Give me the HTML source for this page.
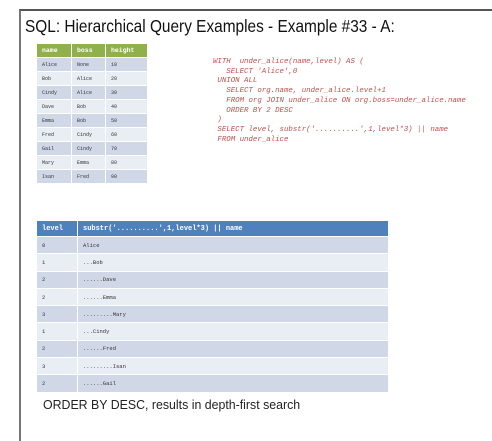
<!DOCTYPE html>
<html><head><style>
body{margin:0;width:492px;height:429px;background:#fff;position:relative;overflow:hidden;font-family:"Liberation Sans",sans-serif}
.frame{position:absolute;left:19px;top:9px;width:480px;height:430px;border-top:2px solid #555;border-left:2px solid #777}
.title{position:absolute;left:25px;top:16px;font-size:17.5px;color:#111;transform:scaleX(0.88);transform-origin:0 0;white-space:nowrap}
table{position:absolute;border-collapse:separate;border-spacing:1px;font-family:"Liberation Mono",monospace}
td,th{padding:0 0 0 5px;text-align:left}
.t1{left:36px;top:43px;font-size:5px}
.t1 th{background:#8fb04a;color:#fff;height:13px;font-size:6.5px}
.t1 td{height:13px;color:#333}
.t2{left:36px;top:220px;font-size:5.5px}
.t2 th{background:#4f81bd;color:#fff;height:15px;font-size:7px}
.t2 td{height:16.3px;color:#333}
tr.a td{background:#d0d8e8}
tr.b td{background:#e9edf4}
.code{position:absolute;left:213px;top:58px;font-family:"Liberation Mono",monospace;font-style:italic;font-size:7.4px;line-height:9.7px;color:#c0504d;white-space:pre}
.cap{position:absolute;left:43px;top:397px;font-size:13px;color:#222;transform:scaleX(0.95);transform-origin:0 0;white-space:nowrap}
</style></head><body>
<div class="frame"></div>
<div class="title">SQL: Hierarchical Query Examples - Example #33 - A:</div>
<table class="t1">
<tr><th style="width:29px">name</th><th style="width:28px">boss</th><th style="width:36px">height</th></tr>
<tr class="a"><td>Alice</td><td>None</td><td>10</td></tr>
<tr class="b"><td>Bob</td><td>Alice</td><td>20</td></tr>
<tr class="a"><td>Cindy</td><td>Alice</td><td>30</td></tr>
<tr class="b"><td>Dave</td><td>Bob</td><td>40</td></tr>
<tr class="a"><td>Emma</td><td>Bob</td><td>50</td></tr>
<tr class="b"><td>Fred</td><td>Cindy</td><td>60</td></tr>
<tr class="a"><td>Gail</td><td>Cindy</td><td>70</td></tr>
<tr class="b"><td>Mary</td><td>Emma</td><td>80</td></tr>
<tr class="a"><td>Isan</td><td>Fred</td><td>90</td></tr>
</table>
<div class="code">WITH  under_alice(name,level) AS (
   SELECT 'Alice',0
 UNION ALL
   SELECT org.name, under_alice.level+1
   FROM org JOIN under_alice ON org.boss=under_alice.name
   ORDER BY 2 DESC
 )
 SELECT level, substr('..........',1,level*3) || name
 FROM under_alice</div>
<table class="t2">
<tr><th style="width:35px">level</th><th style="width:305px">substr('..........',1,level*3) || name</th></tr>
<tr class="a"><td>0</td><td>Alice</td></tr>
<tr class="b"><td>1</td><td>...Bob</td></tr>
<tr class="a"><td>2</td><td>......Dave</td></tr>
<tr class="b"><td>2</td><td>......Emma</td></tr>
<tr class="a"><td>3</td><td>.........Mary</td></tr>
<tr class="b"><td>1</td><td>...Cindy</td></tr>
<tr class="a"><td>2</td><td>......Fred</td></tr>
<tr class="b"><td>3</td><td>.........Isan</td></tr>
<tr class="a"><td>2</td><td>......Gail</td></tr>
</table>
<div class="cap">ORDER BY DESC, results in depth-first search</div>
</body></html>
